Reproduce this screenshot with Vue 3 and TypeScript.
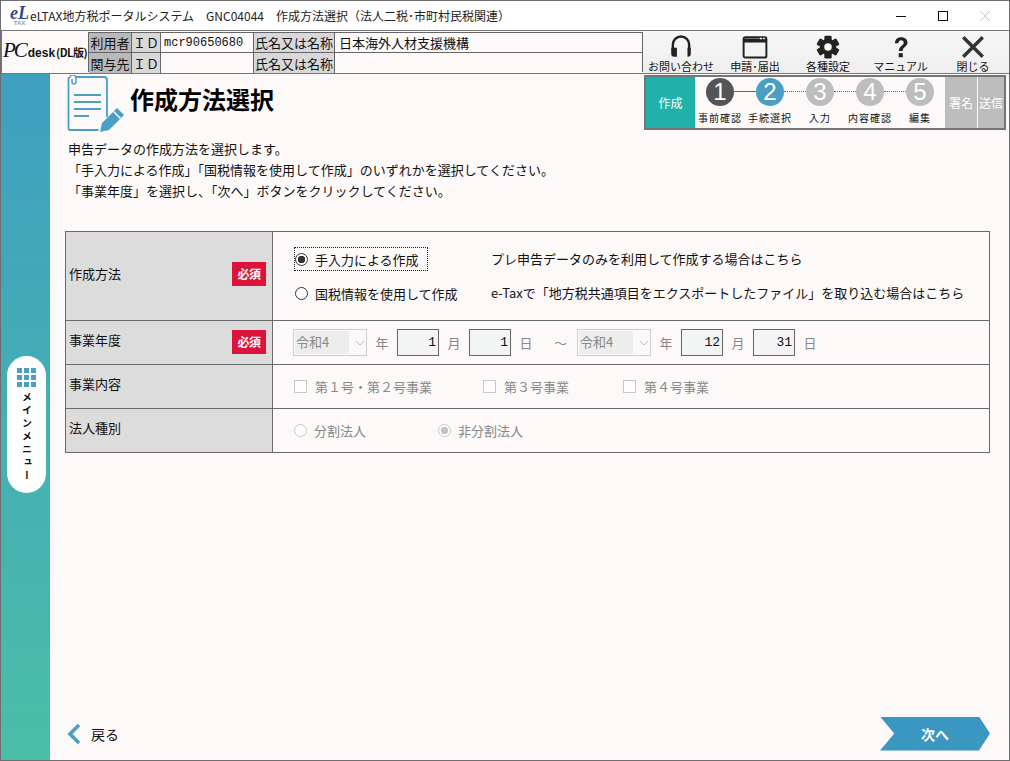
<script setup lang="ts">
const userRows = [
  { role: "利用者", id: "mcr90650680", name: "日本海外人材支援機構" },
  { role: "関与先", id: "", name: "" },
];
const navItems = [
  { key: "help", label: "お問い合わせ" },
  { key: "apply", label: "申請･届出" },
  { key: "settings", label: "各種設定" },
  { key: "manual", label: "マニュアル" },
  { key: "close", label: "閉じる" },
];
const steps = [
  { no: 1, label: "事前確認", state: "done" },
  { no: 2, label: "手続選択", state: "current" },
  { no: 3, label: "入力", state: "todo" },
  { no: 4, label: "内容確認", state: "todo" },
  { no: 5, label: "編集", state: "todo" },
];
const bizTypes = ["第１号・第２号事業", "第３号事業", "第４号事業"];
</script>

<template>
  <div class="window">
    <header class="titlebar">
      <div class="app-logo">
        <span class="app-logo-el">eL</span>
        <span class="app-logo-tax">TAX</span>
      </div>
      <span class="title-text">eLTAX地方税ポータルシステム　GNC04044　作成方法選択（法人二税･市町村民税関連）</span>
      <div class="win-controls">
        <svg width="12" height="12" viewBox="0 0 12 12"><path d="M1 6.5h10" stroke="#111" fill="none" /></svg>
        <svg width="12" height="12" viewBox="0 0 12 12"><rect x="1.5" y="1.5" width="9" height="9" stroke="#111" fill="none" /></svg>
        <svg width="12" height="12" viewBox="0 0 12 12"><path d="M1 1l10 10M11 1L1 11" stroke="#c8c8c8" fill="none" /></svg>
      </div>
    </header>

    <div class="userbar">
      <div class="pc-logo"><i>PC</i><span>desk</span><small>(DL版)</small></div>
      <div class="user-table">
        <template v-for="row in userRows" :key="row.role">
          <div class="uc uc-role">{{ row.role }}</div>
          <div class="uc uc-head uc-id">ＩＤ</div>
          <div class="uc uc-val uc-mono">{{ row.id }}</div>
          <div class="uc uc-head">氏名又は名称</div>
          <div class="uc uc-val uc-name">{{ row.name }}</div>
        </template>
      </div>
      <nav class="nav">
        <div v-for="item in navItems" :key="item.key" class="nav-item">
          <svg v-if="item.key === 'help'" class="nav-icon" viewBox="0 0 32 32">
            <path d="M6 22V13a10 10 0 0 1 20 0v9" fill="none" stroke="#222" stroke-width="3" />
            <path d="M4 17h7v11H7a3 3 0 0 1-3-3zM28 17h-4v11h1a3 3 0 0 0 3-3z" fill="#222" />
          </svg>
          <svg v-else-if="item.key === 'apply'" class="nav-icon" viewBox="0 0 32 32">
            <rect x="2" y="4" width="28" height="25" rx="2" fill="none" stroke="#222" stroke-width="2.4" />
            <path d="M2 8h28" stroke="#222" stroke-width="5" />
            <path d="M22 5.5h2.5M26 5.5h2" stroke="#f7f7f7" stroke-width="2" />
          </svg>
          <svg v-else-if="item.key === 'settings'" class="nav-icon" viewBox="0 0 32 32">
            <g fill="#222">
              <rect v-for="a in [0, 60, 120]" :key="a" x="11.5" y="2" width="9" height="28" rx="1.5" :transform="`rotate(${a} 16 16)`" />
              <circle cx="16" cy="16" r="10" />
            </g>
            <circle cx="16" cy="16" r="4.6" fill="#f7f7f7" />
          </svg>
          <svg v-else-if="item.key === 'manual'" class="nav-icon" viewBox="0 0 32 32">
            <path d="M8.5 11.5C8.5 6.5 12 4 16.3 4c4.6 0 7.7 2.8 7.7 6.6 0 5.4-6 5.4-6 10.4h-4.6c0-6.4 6-6.6 6-10.2 0-1.8-1.3-3-3.2-3-2 0-3.2 1.3-3.3 3.7z" fill="#222" />
            <rect x="13.2" y="23.6" width="5" height="5" fill="#222" />
          </svg>
          <svg v-else class="nav-icon" viewBox="0 0 32 32">
            <path d="M4 4l24 24M28 4L4 28" stroke="#333" stroke-width="4.2" fill="none" />
          </svg>
          <span class="nav-label">{{ item.label }}</span>
        </div>
      </nav>
    </div>

    <div class="body">
      <aside class="side">
        <div class="menu-pill">
          <div class="menu-grid"><i v-for="n in 9" :key="n"></i></div>
          <span class="menu-text">メインメニュー</span>
        </div>
      </aside>

      <main class="main">
        <div class="head-row">
          <svg class="page-icon" width="60" height="60" viewBox="0 0 60 60">
            <path d="M5 2h34a3 3 0 0 1 3 3v37M5 2a2 2 0 0 0-1.500 2v49a2 2 0 0 0 2 2h28" fill="none" stroke="#4a9fc4" stroke-width="1.800" />
            <path d="M5 1c2-2 6-1 6 2v4a2 2 0 0 1-4 0V4" fill="#fdf9f8" stroke="#4a9fc4" stroke-width="1.500" />
            <path d="M9 20h27M9 27h27M9 34h27M9 41h15" stroke="#4a9fc4" stroke-width="2" />
            <path d="M35 57l2-9 15-15 7 7-15 15z" fill="#4a9fc4" />
            <path d="M48.500 36.500l7 7" stroke="#fdf9f8" stroke-width="1.500" />
          </svg>
          <h1 class="page-title">作成方法選択</h1>
          <div class="steps">
            <div class="step-now">作成</div>
            <div class="step-list">
              <template v-for="(s, i) in steps" :key="s.no">
                <div class="step">
                  <div class="step-no" :class="`step-no--${s.state}`">{{ s.no }}</div>
                  <div class="step-label">{{ s.label }}</div>
                </div>
                <div v-if="i < steps.length - 1" class="step-line" :class="{ 'step-line--solid': i === 0 }"></div>
              </template>
            </div>
            <div class="step-after">署名</div>
            <div class="step-after step-after--last">送信</div>
          </div>
        </div>

        <div class="desc">
          <p>申告データの作成方法を選択します。</p>
          <p>「手入力による作成」「国税情報を使用して作成」のいずれかを選択してください。</p>
          <p>「事業年度」を選択し、「次へ」ボタンをクリックしてください。</p>
        </div>

        <section class="form">
          <div class="form-row form-row--method">
            <div class="form-th form-th--center">作成方法<span class="req">必須</span></div>
            <div class="form-td method">
              <label class="method-choice method-choice--focus"><span class="radio radio--on"></span>手入力による作成</label>
              <span class="method-note">プレ申告データのみを利用して作成する場合はこちら</span>
              <label class="method-choice"><span class="radio"></span>国税情報を使用して作成</label>
              <span class="method-note">e-Taxで「地方税共通項目をエクスポートしたファイル」を取り込む場合はこちら</span>
            </div>
          </div>
          <div class="form-row">
            <div class="form-th">事業年度<span class="req">必須</span></div>
            <div class="form-td dates">
              <div class="sel"><span class="sel-val">令和4</span><svg width="10" height="6" viewBox="0 0 10 6"><path d="M1 1l4 4 4-4" fill="none" stroke="#bbb" /></svg></div>
              <span class="unit">年</span>
              <div class="num">1</div>
              <span class="unit">月</span>
              <div class="num">1</div>
              <span class="unit">日</span>
              <span class="tilde">～</span>
              <div class="sel"><span class="sel-val">令和4</span><svg width="10" height="6" viewBox="0 0 10 6"><path d="M1 1l4 4 4-4" fill="none" stroke="#bbb" /></svg></div>
              <span class="unit">年</span>
              <div class="num">12</div>
              <span class="unit">月</span>
              <div class="num">31</div>
              <span class="unit">日</span>
            </div>
          </div>
          <div class="form-row">
            <div class="form-th">事業内容</div>
            <div class="form-td biz">
              <label v-for="b in bizTypes" :key="b" class="off-choice"><span class="check"></span>{{ b }}</label>
            </div>
          </div>
          <div class="form-row">
            <div class="form-th">法人種別</div>
            <div class="form-td corp">
              <label class="off-choice"><span class="radio radio--off"></span>分割法人</label>
              <label class="off-choice"><span class="radio radio--off radio--off-on"></span>非分割法人</label>
            </div>
          </div>
        </section>

        <footer class="foot">
          <div class="back">
            <svg width="14" height="22" viewBox="0 0 14 22"><path d="M12 2L3 11l9 9" fill="none" stroke="#4a9fc4" stroke-width="3.600" /></svg>
            <span>戻る</span>
          </div>
          <div class="next">次へ</div>
        </footer>
      </main>
    </div>
  </div>
</template>

<style>
html,
body {
  margin: 0;
  background: #fdf9f8;
}
</style>

<style scoped>
* {
  box-sizing: border-box;
}

.window {
  width: 1010px;
  height: 761px;
  display: flex;
  flex-direction: column;
  border: 1px solid #6e6e6e;
  border-width: 1px 1px 1px 1px;
  font-family: "Noto Sans CJK JP", "Noto Sans", sans-serif;
  font-size: 13px;
  color: #111;
  background: #fdf9f8;
  overflow: hidden;
}

.titlebar {
  height: 30px;
  flex: none;
  display: flex;
  align-items: center;
  background: #fff;
  border-bottom: 1px solid #777;
  padding-left: 8px;
}

.app-logo {
  width: 21px;
  height: 24px;
  display: flex;
  flex-direction: column;
  align-items: center;
  line-height: 1;
}

.app-logo-el {
  font-family: "Liberation Serif", serif;
  font-style: italic;
  font-weight: 700;
  font-size: 18px;
  color: #2f4a96;
  height: 16px;
}

.app-logo-tax {
  font-family: "Liberation Sans", sans-serif;
  font-size: 6px;
  font-weight: 700;
  color: #9a9a9a;
}

.title-text {
  margin-left: 0;
  font-size: 12px;
  color: #222;
  white-space: nowrap;
}

.win-controls {
  margin-left: auto;
  width: 114px;
  display: flex;
  justify-content: space-between;
  padding-right: 18px;
}

.userbar {
  height: 43px;
  flex: none;
  display: flex;
  background: #fdf9f8;
  border-bottom: 1px solid #777;
  border-left: 1px solid #777;
}

.pc-logo {
  width: 86px;
  flex: none;
  display: flex;
  align-items: baseline;
  justify-content: center;
  padding-top: 7px;
  white-space: nowrap;
  font-family: "Liberation Sans", sans-serif;
  color: #111;
}

.pc-logo i {
  font-family: "Liberation Serif", serif;
  font-size: 21px;
  letter-spacing: -2px;
  margin-right: 2px;
}

.pc-logo span {
  font-size: 12px;
  font-weight: 700;
}

.pc-logo small {
  font-size: 11px;
  font-weight: 700;
  letter-spacing: -0.5px;
  margin-left: 1px;
  font-family: "Noto Sans CJK JP", sans-serif;
}

.user-table {
  width: 555px;
  height: 40px;
  margin-top: 1px;
  flex: none;
  display: grid;
  grid-template-columns: 43px 29px 93px 81px 1fr;
  grid-template-rows: 20px 20px;
  border: 1px solid #666;
  border-width: 1px 1px 1px 1px;
}

.uc {
  display: flex;
  align-items: center;
  border-right: 1px solid #666;
  border-bottom: 1px solid #666;
  padding: 0 2px;
  font-size: 13px;
  white-space: nowrap;
  line-height: 1;
}

.uc:nth-child(5n) {
  border-right: 0;
}

.uc:nth-last-child(-n + 5) {
  border-bottom: 0;
}

.uc-role {
  background: #b9b9b9;
  justify-content: center;
}

.uc-head {
  background: #d8d8d8;
  justify-content: center;
}

.uc-id {
  padding: 0;
}

.uc-val {
  background: #fdf9f8;
}

.uc-mono {
  font-family: "Liberation Mono", monospace;
  font-size: 12px;
  padding-left: 3px;
}

.uc-name {
  padding-left: 4px;
}

.nav {
  flex: 1;
  display: grid;
  grid-template-columns: 74px 74px 72px 73px 1fr;
  padding-left: 1px;
  background: linear-gradient(#f7f7f7, #eeeeee);
}

.nav-item {
  display: flex;
  flex-direction: column;
  align-items: center;
  justify-content: flex-end;
}

.nav-icon {
  width: 26px;
  height: 26px;
  flex: none;
}

.nav-label {
  font-size: 11px;
  line-height: 13px;
  white-space: nowrap;
}

.body {
  flex: 1;
  display: flex;
  min-height: 0;
}

.side {
  width: 49px;
  flex: none;
  padding: 282px 0 0 6px;
  background: linear-gradient(to bottom, #3f9fc0, #4abea8);
}

.menu-pill {
  width: 39px;
  height: 137px;
  border-radius: 20px;
  background: #fff;
  display: flex;
  flex-direction: column;
  align-items: center;
  padding-top: 12px;
}

.menu-grid {
  display: grid;
  grid-template-columns: repeat(3, 5px);
  grid-auto-rows: 5px;
  gap: 2px;
  margin-bottom: 5px;
}

.menu-grid i {
  background: #4a9fc4;
}

.menu-text {
  writing-mode: vertical-rl;
  font-size: 10px;
  font-weight: 700;
  letter-spacing: 3px;
  line-height: 1;
}

.main {
  flex: 1;
  min-width: 0;
  display: flex;
  flex-direction: column;
  padding: 0 19px 0 15px;
  background: #fdf9f8;
}

.head-row {
  height: 57px;
  display: flex;
  align-items: flex-start;
  margin-right: -16px;
  padding-top: 1px;
}

.page-icon {
  flex: none;
}

.page-title {
  margin: 7px 0 0 5px;
  font-size: 24px;
  line-height: 34px;
  font-weight: 700;
  color: #000;
}

.steps {
  margin-left: auto;
  width: 362px;
  height: 55px;
  display: flex;
  border: 2px solid #757575;
  background: #fdf9f8;
}

.step-now {
  width: 49px;
  background: #20b2aa;
  color: #fff;
  display: flex;
  align-items: center;
  justify-content: center;
  font-size: 12px;
}

.step-list {
  width: 250px;
  display: flex;
  justify-content: center;
  align-items: flex-start;
  padding-top: 1px;
}

.step {
  width: 28px;
  display: flex;
  flex-direction: column;
  align-items: center;
  flex: none;
}

.step-no {
  width: 28px;
  height: 28px;
  border-radius: 50%;
  color: #fff;
  display: flex;
  align-items: center;
  justify-content: center;
  font-family: "Liberation Sans", sans-serif;
  font-size: 24px;
  line-height: 1;
}

.step-no--done {
  background: #555;
}

.step-no--current {
  background: #4a9fc4;
}

.step-no--todo {
  background: #bdbdbd;
}

.step-label {
  margin-top: 4px;
  font-size: 10px;
  line-height: 15px;
  letter-spacing: 1px;
  white-space: nowrap;
}

.step-line {
  width: 22px;
  margin-top: 13px;
  border-top: 1px dotted #666;
  flex: none;
}

.step-line--solid {
  border-top: 1px solid #666;
}

.step-after {
  width: 33px;
  background: #bdbdbd;
  color: #fff;
  display: flex;
  align-items: center;
  justify-content: center;
  font-size: 12px;
  border-right: 1px solid #fdf9f8;
}

.step-after--last {
  flex: 1;
  border-right: 0;
}

.desc {
  margin-top: 7px;
  padding-left: 3px;
}

.desc p {
  margin: 0;
  line-height: 21px;
  white-space: nowrap;
}

.form {
  margin-top: 30px;
  width: 925px;
  border: 1px solid #6a6a6a;
}

.form-row {
  height: 44px;
  display: flex;
  border-top: 1px solid #6a6a6a;
}

.form-row:first-child {
  border-top: 0;
}

.form-row--method {
  height: 88px;
}

.form-th {
  width: 207px;
  flex: none;
  position: relative;
  background: #dcdcdc;
  border-right: 1px solid #6a6a6a;
  padding: 9px 0 0 3px;
  line-height: 20px;
}

.form-th--center {
  padding-top: 32px;
}

.req {
  position: absolute;
  left: 166px;
  top: 9px;
  width: 34px;
  height: 24px;
  background: #dc143c;
  color: #fff;
  font-size: 12px;
  font-weight: 700;
  display: flex;
  align-items: center;
  justify-content: center;
  letter-spacing: -0.5px;
}

.form-th--center .req {
  top: 30px;
}

.form-td {
  flex: 1;
  min-width: 0;
  display: flex;
  align-items: center;
  padding-left: 20px;
}

.method {
  display: grid;
  grid-template-columns: 197px 1fr;
  grid-auto-rows: 24px;
  row-gap: 10px;
  align-content: center;
  padding-left: 21px;
  white-space: nowrap;
}

.method-choice {
  display: flex;
  align-items: center;
  gap: 7px;
  width: 134px;
  height: 24px;
  padding-left: 1px;
  white-space: nowrap;
}

.method-choice--focus {
  outline: 1px dotted #222;
  outline-offset: -1px;
}

.method-note {
  line-height: 24px;
}

.radio {
  display: inline-block;
  width: 13px;
  height: 13px;
  flex: none;
  border: 1px solid #333;
  border-radius: 50%;
  background: #fff;
}

.radio--on {
  background: radial-gradient(circle, #333 0 3.500px, #fff 4px);
}

.radio--off {
  border-color: #c8c8c8;
}

.radio--off-on {
  background: radial-gradient(circle, #c4c4c4 0 3.500px, #fff 4px);
}

.dates {
  padding-left: 20px;
  color: #888;
}

.sel {
  width: 74px;
  height: 27px;
  flex: none;
  border: 1px solid #cfcfcf;
  padding: 1px;
  display: flex;
  align-items: center;
}

.sel-val {
  width: 54px;
  height: 23px;
  background: #ededed;
  padding-left: 1px;
  line-height: 21px;
  color: #888;
}

.sel svg {
  margin-left: 6px;
}

.unit {
  width: 30px;
  flex: none;
  text-align: center;
}

.num {
  width: 42px;
  height: 27px;
  flex: none;
  border: 1px solid #666;
  background: #f3f5f5;
  color: #111;
  font-family: "Liberation Mono", monospace;
  font-size: 13px;
  text-align: right;
  padding-right: 2px;
  line-height: 25px;
}

.tilde {
  width: 33px;
  margin: 0 0 0 3px;
  flex: none;
  text-align: center;
}

.off-choice {
  display: flex;
  align-items: center;
  color: #888;
  gap: 8px;
  white-space: nowrap;
}

.check {
  display: inline-block;
  width: 13px;
  height: 13px;
  border: 1px solid #c8c8c8;
  background: #fff;
}

.biz {
  padding-left: 21px;
}

.biz .off-choice {
  width: 189px;
  gap: 8px;
}

.biz .off-choice + .off-choice {
  width: 140px;
}

.corp {
  padding-left: 21px;
}

.corp .off-choice {
  width: 144px;
  gap: 7px;
}

.foot {
  margin-top: auto;
  height: 41px;
  margin-bottom: 6px;
  display: flex;
  align-items: center;
  justify-content: space-between;
}

.back {
  display: flex;
  align-items: center;
  gap: 10px;
  margin-left: 2px;
  font-size: 14px;
  color: #111;
}

.next {
  width: 110px;
  height: 34px;
  margin-right: 0;
  background: #3a97c2;
  color: #fff;
  font-weight: 700;
  font-size: 14px;
  display: flex;
  align-items: center;
  justify-content: center;
  clip-path: polygon(0 0, 90% 0, 100% 50%, 90% 100%, 0 100%, 13% 50%);
}
</style>
